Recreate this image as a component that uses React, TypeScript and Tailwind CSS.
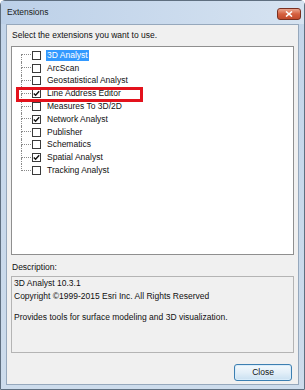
import React from "react";

const items: { label: string; checked: boolean; selected?: boolean }[] = [
  { label: "3D Analyst", checked: false, selected: true },
  { label: "ArcScan", checked: false },
  { label: "Geostatistical Analyst", checked: false },
  { label: "Line Address Editor", checked: true },
  { label: "Measures To 3D/2D", checked: false },
  { label: "Network Analyst", checked: true },
  { label: "Publisher", checked: false },
  { label: "Schematics", checked: false },
  { label: "Spatial Analyst", checked: true },
  { label: "Tracking Analyst", checked: false },
];

function Check({ checked }: { checked: boolean }) {
  return (
    <div className="w-[9px] h-[9px] border border-[#3a3a3a] bg-white shrink-0 flex items-center justify-center">
      {checked && (
        <svg width="7" height="7" viewBox="0 0 7 7">
          <path d="M0.8 3.4 L2.6 5.3 L6.2 1.2" fill="none" stroke="#111" strokeWidth="1.4" />
        </svg>
      )}
    </div>
  );
}

export default function App() {
  return (
    <div
      className="w-[305px] h-[390px] flex flex-col border border-[#5f6f80] rounded-t-[5px] bg-gradient-to-b from-[#c3d5ea] to-[#cddcec] text-[8.5px] text-[#111]"
      style={{ fontFamily: '"Liberation Sans", Arial, sans-serif' }}
    >
      <div className="h-[23px] flex items-center justify-between pl-[6px] pr-[3px] bg-gradient-to-r from-[#bcd0e8] to-[#d6e3f1]">
        <span className="text-[8.5px] text-[#1b1b1b] leading-none">Extensions</span>
        <div className="w-[24px] h-[12px] mt-[2px] rounded-[3px] border border-[#7a3020] bg-gradient-to-b from-[#eaa58e] via-[#d5603f] to-[#c24a2c] flex items-center justify-center">
          <svg width="8" height="6" viewBox="0 0 8 6">
            <path d="M1 0.5 L7 5.5 M7 0.5 L1 5.5" stroke="#fff" strokeWidth="1.6" />
          </svg>
        </div>
      </div>
      <div className="flex-1 mx-[5px] mb-[4px] bg-[#f0f0f0] border border-[#96a8bc] flex flex-col px-[4px] pt-[4px]">
        <div className="h-[12px] leading-[12px] pl-[1px]">Select the extensions you want to use.</div>
        <div className="relative mt-[5px] h-[209px] bg-white border border-[#8f8f8f] pt-[2px] pl-[9px]">
          {items.map((it, i) => (
            <div key={it.label} className="h-[12.8px] flex items-center">
              <div className="w-[10px] self-stretch flex flex-col">
                <div
                  className={`h-1/2 border-b border-dotted border-b-[#8a8a8a] ${i === 0 ? "" : "border-l border-l-[#8a8a8a]"}`}
                  style={{ borderLeftStyle: "dotted" }}
                />
                <div
                  className={`h-1/2 ${i === items.length - 1 ? "" : "border-l border-dotted border-l-[#8a8a8a]"}`}
                />
              </div>
              <div className="ml-[1px]">
                <Check checked={it.checked} />
              </div>
              <span
                className={`ml-[5px] px-[1px] leading-[11px] whitespace-nowrap ${it.selected ? "bg-[#3399ff] text-white" : ""}`}
              >
                {it.label}
              </span>
            </div>
          ))}
          <div className="absolute left-[4px] top-[40px] w-[127px] h-[15px] border-[3px] border-[#e3121c]" />
        </div>
        <div className="mt-[6px] h-[12px] leading-[12px] pl-[1px]">Description:</div>
        <div className="mt-[3px] h-[77px] border border-[#b4b4b4] bg-[#f0f0f0] pl-[2px]">
          <div className="leading-[13px]">3D Analyst 10.3.1</div>
          <div className="leading-[13px]">Copyright ©1999-2015 Esri Inc. All Rights Reserved</div>
          <div className="leading-[13px] mt-[8px]">Provides tools for surface modeling and 3D visualization.</div>
        </div>
        <div className="mt-[11px] flex justify-end pr-[2px]">
          <div className="w-[58px] h-[17px] rounded-[3px] border border-[#3c7fb1] bg-gradient-to-b from-[#f3f9fd] via-[#e3eff8] to-[#c9e0f1] flex items-center justify-center shadow-[inset_0_0_0_1px_#d9ecfa]">
            Close
          </div>
        </div>
      </div>
    </div>
  );
}
